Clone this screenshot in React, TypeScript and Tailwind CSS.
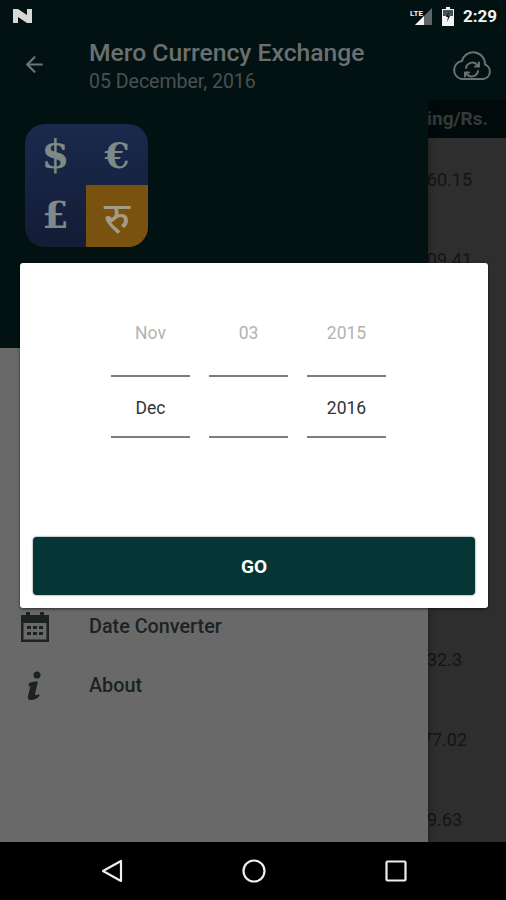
import { ArrowLeft } from 'lucide-react'

const RATES = [
  { value: '160.15', pad: 'pr-[34px]' },
  { value: '109.41', pad: 'pr-[34px]' },
  { value: '', pad: '' },
  { value: '', pad: '' },
  { value: '', pad: '' },
  { value: '', pad: '' },
  { value: '132.3', pad: 'pr-[44px]' },
  { value: '177.02', pad: 'pr-[39px]' },
  { value: '119.63', pad: 'pr-[44px]' },
]

const PICKER = [
  { prev: 'Nov', current: 'Dec' },
  { prev: '03', current: '' },
  { prev: '2015', current: '2016' },
]

function StatusBar() {
  return (
    <div className="flex h-[33px] items-center justify-between pl-[13px] pr-[9px]">
      <svg width="20" height="16" viewBox="0 0 20 16" className="mt-[-2px]">
        <path d="M0 1h5l9 6V1h5v14h-5L5 9v6H0z" fill="#d8d8d8" />
      </svg>
      <div className="flex items-center gap-[9px]">
        <svg width="24" height="18" viewBox="0 0 24 18">
          <path d="M23 0v17H6z" fill="#5c6666" />
          <path d="M15 8v9H6z" fill="#f2f2f2" />
          <text x="1" y="8" fontSize="8" fontWeight="700" fill="#f2f2f2" fontFamily="Roboto, sans-serif">LTE</text>
        </svg>
        <svg width="12" height="19" viewBox="0 0 12 19">
          <path d="M4 0h4v2h4v17H0V2h4z" fill="#f2f2f2" />
          <path d="M1 3h10v6H1z" fill="#4a5252" />
          <path d="M7 4 4 10h2l-1 5 3-6H6z" fill="#0a1a1a" />
        </svg>
        <span className="font-['Roboto',sans-serif] text-[17px] font-bold leading-none text-[#f2f2f2]">2:29</span>
      </div>
    </div>
  )
}

function Toolbar() {
  return (
    <div className="flex h-[67px] items-start">
      <div className="flex w-[89px] justify-start pl-[22px] pt-[19px]">
        <ArrowLeft size={25} strokeWidth={2} className="text-[#6f7575]" />
      </div>
      <div className="flex-1 pt-[5px]">
        <div className="font-['Roboto',sans-serif] text-[24.7px] font-medium leading-[30px] text-[#6a6f6f]">Mero Currency Exchange</div>
        <div className="font-['Roboto',sans-serif] text-[19.5px] leading-[28px] text-[#4a5050]">05 December, 2016</div>
      </div>
      <svg width="40" height="30" viewBox="0 0 40 30" className="mr-[14px] mt-[17px]" fill="none" stroke="#6b7171" strokeWidth="2" strokeLinecap="round" strokeLinejoin="round">
        <path d="M9 29h22a7.500 7.500 0 0 0 2-14.500A11.700 11.700 0 0 0 10 11 9.200 9.200 0 0 0 9 29z" />
        <path d="M14 18a6.500 6.500 0 0 1 11-3.500l2 2M27 12.500v4h-4" />
        <path d="M26 21a6.500 6.500 0 0 1-11 3.500l-2-2M13 26.500v-4h4" />
      </svg>
    </div>
  )
}

function Logo() {
  return (
    <div className="grid h-[123px] w-[123px] grid-cols-[61px_62px] grid-rows-[61px_62px] overflow-hidden rounded-[20px] bg-gradient-to-b from-[#192a4d] to-[#141c36] text-[#7f8a88]">
      <div className="flex items-center justify-center pb-[2px] font-['DejaVu_Serif',serif] text-[40px] font-bold">$</div>
      <div className="flex items-center justify-center font-['DejaVu_Serif',serif] text-[36px] font-bold">€</div>
      <div className="flex items-center justify-center pb-[3px] font-['DejaVu_Serif',serif] text-[38px] font-bold">£</div>
      <div className="flex items-center justify-center bg-[#7a5210] font-['Noto_Sans',sans-serif] text-[44px] text-[#a59c85]">रु</div>
    </div>
  )
}

function CalendarIcon() {
  return (
    <svg width="30" height="32" viewBox="0 0 30 32" fill="#1c2222">
      <path d="M1 4h5V1h4v3h10V1h4v3h5v27H1zM3.500 12v16.500h23V12z" fillRule="evenodd" />
      <path d="M7 15h4v3H7zM13 15h4v3h-4zM19 15h4v3h-4zM7 21h4v3H7zM13 21h4v3h-4zM19 21h4v3h-4z" />
    </svg>
  )
}

function InfoIcon() {
  return (
    <svg width="16" height="30" viewBox="0 0 16 30" fill="#1c2222">
      <circle cx="10" cy="4" r="3.500" />
      <path d="M2 12c3-1.500 6-1.500 9-1.500L8 23c0 1.500 1.500 1.500 4 0l.5 2c-3 3-6 4-8.500 4-3 0-3.500-2-3-4l2.500-10c-1 0-1.500.2-2 .5z" />
    </svg>
  )
}

function MenuRow({ icon, label }: { icon: React.ReactNode; label: string }) {
  return (
    <div className="flex h-[59px] items-center">
      <div className="flex w-[89px] justify-center pr-[19px]">{icon}</div>
      <span className="font-['Roboto',sans-serif] text-[19.8px] font-medium text-[#1c2222]">{label}</span>
    </div>
  )
}

function NavBar() {
  return (
    <div className="flex h-[58px] items-center justify-center gap-[118px] bg-black">
      <svg width="24" height="24" viewBox="0 0 24 24" fill="none" stroke="#eeeeee" strokeWidth="2.200" strokeLinejoin="round">
        <path d="M21 2v20L3 12z" />
      </svg>
      <svg width="24" height="24" viewBox="0 0 24 24" fill="none" stroke="#eeeeee" strokeWidth="2.200">
        <circle cx="12" cy="12" r="10.500" />
      </svg>
      <svg width="22" height="22" viewBox="0 0 22 22" className="ml-[1px]" fill="none" stroke="#eeeeee" strokeWidth="2.200" strokeLinejoin="round">
        <rect x="1.500" y="1.500" width="19" height="19" rx="1" />
      </svg>
    </div>
  )
}

function DatePicker() {
  return (
    <div className="absolute left-[20px] top-[263px] z-20 flex h-[345px] w-[468px] flex-col rounded-[3px] bg-white px-[13px] pb-[13px] shadow-[0_1px_3px_rgba(0,0,0,0.6)]">
      <div className="flex flex-1 justify-center gap-[19px] pr-[11px] pt-[40px]">
        {PICKER.map((col) => (
          <div key={col.prev} className="w-[79px] text-center font-['Roboto',sans-serif] text-[17.5px]">
            <div className="h-[74px] border-b-2 border-[#7d7d7d] pt-[20px] leading-[20px] text-[#b3b3b3]">{col.prev}</div>
            <div className="h-[61px] border-b-2 border-[#7d7d7d] pt-[21px] leading-[20px] text-[#333333]">{col.current}</div>
          </div>
        ))}
      </div>
      <button className="h-[58px] rounded-[4px] bg-[#053535] pt-[2px] font-['Roboto',sans-serif] text-[19px] font-bold text-white shadow-[0_0_2px_rgba(0,0,0,0.7)]">GO</button>
    </div>
  )
}

export default function App() {
  return (
    <div className="relative flex h-[900px] w-[506px] flex-col overflow-hidden bg-[#021212]">
      <StatusBar />
      <Toolbar />
      <div className="flex flex-1 overflow-hidden">
        <div className="relative z-10 flex w-[428px] flex-col shadow-[2px_0_6px_rgba(0,0,0,0.25)]">
          <div className="h-[248px] bg-[#021212] pl-[25px] pt-[24px]">
            <Logo />
          </div>
          <div className="flex-1 bg-[#696969] pt-[249px]">
            <MenuRow icon={<CalendarIcon />} label="Date Converter" />
            <MenuRow icon={<InfoIcon />} label="About" />
          </div>
        </div>
        <div className="flex-1 overflow-hidden bg-[#2e2e2e]">
          <div className="flex h-[38px] items-center justify-end bg-[#010a0a] pr-[18px] font-['Roboto',sans-serif] text-[19px] font-bold text-[#333a3a]">
            <span className="whitespace-nowrap">Selling/Rs.</span>
          </div>
          <div className="pt-[1px]">
            {RATES.map((rate, i) => (
              <div key={i} className={`flex h-[80px] items-center justify-end whitespace-nowrap font-['Roboto',sans-serif] text-[18px] text-[#141414] ${rate.pad}`}>
                {rate.value}
              </div>
            ))}
          </div>
        </div>
      </div>
      <NavBar />
      <DatePicker />
    </div>
  )
}
